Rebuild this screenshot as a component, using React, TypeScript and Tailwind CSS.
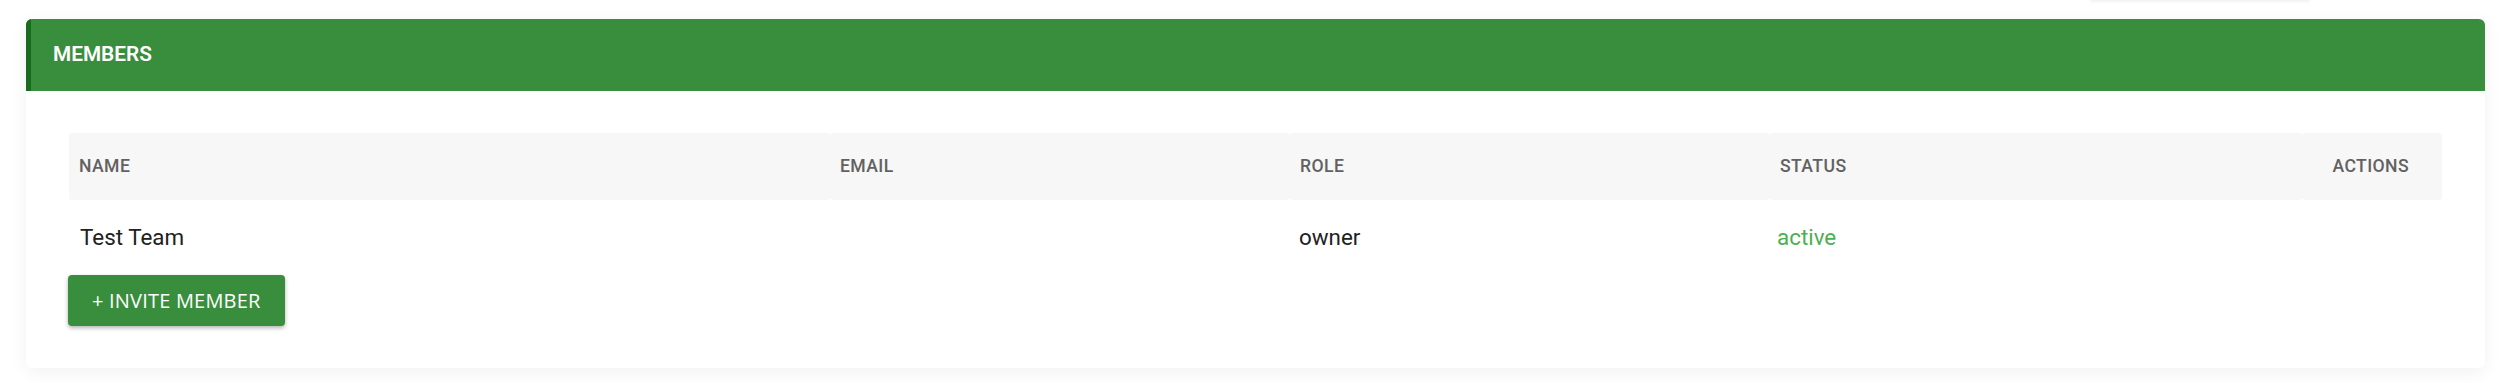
import React from 'react'

type Member = {
  name: string
  email: string
  role: string
  status: string
}

const members: Member[] = [{ name: 'Test Team', email: '', role: 'owner', status: 'active' }]

const columns = ['Name', 'Email', 'Role', 'Status']

const grid = 'grid grid-cols-[761px_460px_480px_532px_1fr]'

const MembersTable = () => (
  <div className="flex flex-col">
    <div className={`${grid} h-[67px]`}>
      {columns.map((col) => (
        <div
          key={col}
          className="flex items-center bg-[#f7f7f7] rounded-[3px] pl-[10px] text-[17.6px] font-medium uppercase tracking-[0.4px] text-[#616161]"
        >
          {col}
        </div>
      ))}
      <div className="flex items-center justify-end bg-[#f7f7f7] rounded-[3px] pr-[33px] text-[17.6px] font-medium uppercase tracking-[0.4px] text-[#616161]">
        Actions
      </div>
    </div>
    {members.map((m) => (
      <div key={m.name} className={`${grid} h-[75px] text-[22.4px] text-[#212121]`}>
        <div className="flex items-center pl-[11px]">{m.name}</div>
        <div className="flex items-center pl-[10px]">{m.email}</div>
        <div className="flex items-center pl-[9px]">{m.role}</div>
        <div className="flex items-center pl-[7px] text-[#4caf50]">{m.status}</div>
        <div />
      </div>
    ))}
  </div>
)

export default function App() {
  return (
    <div className="min-h-[383px] bg-white font-['Roboto','Liberation_Sans',sans-serif] overflow-hidden">
      <div className="flex h-0 justify-start pl-[2090px]">
        <div className="w-[220px] h-[40px] -mt-[40px] bg-white shadow-[0_1px_4px_rgba(0,0,0,0.08)]" />
      </div>
      <div className="pt-[19px] px-[26px]">
        <div className="rounded-[6px] bg-white overflow-hidden shadow-[0_4px_18px_rgba(0,0,0,0.06)]">
          <div className="h-[72px] flex items-center bg-[#388e3c] border-l-[5px] border-[#1b6b1f] pl-[22px]">
            <span className="text-white text-[20.8px] font-semibold">MEMBERS</span>
          </div>
          <div className="pt-[42px] px-[43px] pb-[42px]">
            <MembersTable />
            <div className="flex">
              <button className="h-[51px] px-[24px] -ml-[1px] rounded-[4px] bg-[#388e3c] text-white text-[20px] tracking-[0.2px] font-['Open_Sans','Noto_Sans',sans-serif] shadow-[0_2px_4px_rgba(0,0,0,0.3)]">
                + INVITE MEMBER
              </button>
            </div>
          </div>
        </div>
      </div>
    </div>
  )
}
